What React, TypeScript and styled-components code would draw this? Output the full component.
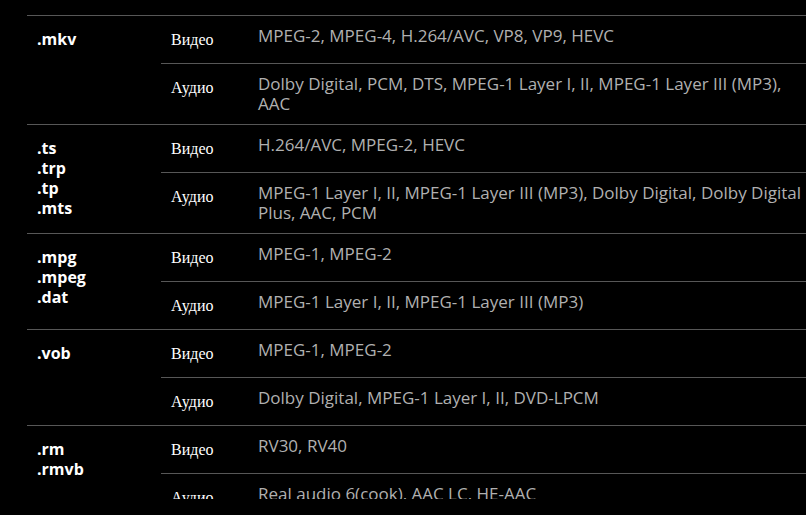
import * as React from 'react';
import styled, { createGlobalStyle } from 'styled-components';

type Codec = { kind: string; formats: string };
type Container = { exts: string[]; codecs: Codec[] };

const containers: Container[] = [
  {
    exts: ['.mkv'],
    codecs: [
      { kind: 'Видео', formats: 'MPEG-2, MPEG-4, H.264/AVC, VP8, VP9, HEVC' },
      {
        kind: 'Аудио',
        formats:
          'Dolby Digital, PCM, DTS, MPEG-1 Layer I, II, MPEG-1 Layer III (MP3), AAC',
      },
    ],
  },
  {
    exts: ['.ts', '.trp', '.tp', '.mts'],
    codecs: [
      { kind: 'Видео', formats: 'H.264/AVC, MPEG-2, HEVC' },
      {
        kind: 'Аудио',
        formats:
          'MPEG-1 Layer I, II, MPEG-1 Layer III (MP3), Dolby Digital, Dolby Digital Plus, AAC, PCM',
      },
    ],
  },
  {
    exts: ['.mpg', '.mpeg', '.dat'],
    codecs: [
      { kind: 'Видео', formats: 'MPEG-1, MPEG-2' },
      { kind: 'Аудио', formats: 'MPEG-1 Layer I, II, MPEG-1 Layer III (MP3)' },
    ],
  },
  {
    exts: ['.vob'],
    codecs: [
      { kind: 'Видео', formats: 'MPEG-1, MPEG-2' },
      { kind: 'Аудио', formats: 'Dolby Digital, MPEG-1 Layer I, II, DVD-LPCM' },
    ],
  },
  {
    exts: ['.rm', '.rmvb'],
    codecs: [
      { kind: 'Видео', formats: 'RV30, RV40' },
      { kind: 'Аудио', formats: 'Real audio 6(cook), AAC LC, HE-AAC' },
    ],
  },
];

const App = () => (
  <>
    <GlobalStyle />
    <Viewport>
      <FormatTable>
        <colgroup>
          <col style={{ width: 134 }} />
          <col style={{ width: 87 }} />
          <col />
        </colgroup>
        <tbody>
          {containers.map(({ exts, codecs }) =>
            codecs.map((codec, i) => (
              <tr key={exts[0] + codec.kind}>
                {i === 0 && (
                  <ExtCell rowSpan={codecs.length}>
                    {exts.map((ext) => (
                      <Ext key={ext}>{ext}</Ext>
                    ))}
                  </ExtCell>
                )}
                <KindCell>{codec.kind}</KindCell>
                <FormatsCell>{codec.formats}</FormatsCell>
              </tr>
            )),
          )}
        </tbody>
      </FormatTable>
    </Viewport>
  </>
);

const GlobalStyle = createGlobalStyle`
  html, body {
    margin: 0;
    background: #000;
  }
`;

const Viewport = styled.div`
  height: 499px;
  overflow: hidden;
  padding: 15px 0 0 27px;
  box-sizing: border-box;
`;

const FormatTable = styled.table`
  width: 783px;
  table-layout: fixed;
  border-collapse: collapse;
  border-spacing: 0;
`;

const Cell = styled.td`
  vertical-align: top;
  border-top: 1px solid #575757;
`;

const ExtCell = styled(Cell)`
  padding: 13px 0 0 10px;
`;

const Ext = styled.div`
  font-family: 'Open Sans', 'Liberation Sans', sans-serif;
  font-weight: 700;
  font-size: 16px;
  line-height: 20px;
  color: #fff;
`;

const KindCell = styled(Cell)`
  padding: 10px 0 10px 10px;
  font-family: 'Liberation Serif', 'DejaVu Serif', serif;
  font-size: 16px;
  line-height: 27px;
  color: #fff;
`;

const FormatsCell = styled(Cell)`
  padding: 10px 0 10px 10px;
  font-family: 'Open Sans', 'Liberation Sans', sans-serif;
  font-size: 17px;
  line-height: 20px;
  color: #b0b0b0;
`;

export default App;
